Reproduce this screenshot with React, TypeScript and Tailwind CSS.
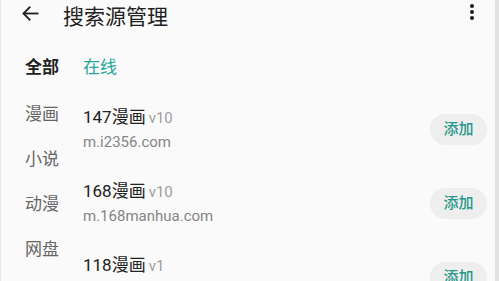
import React from "react";

interface Source {
  name: string;
  version: string;
  host: string;
}

const sources: Source[] = [
  { name: "147漫画", version: "v10", host: "m.i2356.com" },
  { name: "168漫画", version: "v10", host: "m.168manhua.com" },
  { name: "118漫画", version: "v1", host: "m.118manhua.com" },
];

const categories = ["漫画", "小说", "动漫", "网盘"];

const font = { fontFamily: 'Roboto, "Noto Sans CJK SC", sans-serif' };

export default function App() {
  return (
    <div
      className="w-[499px] h-[281px] overflow-hidden bg-[#fafafa] flex border-l border-[#e6e6e6]"
      style={font}
    >
      <div className="flex-1 flex flex-col">
        {/* toolbar */}
        <div className="h-[34px] flex items-center shrink-0">
          <div className="w-[62px] flex pl-[19px] -mt-[8px]">
            <svg width="21" height="21" viewBox="0 0 24 24" fill="none" stroke="#212121" strokeWidth="2.1" strokeLinecap="square">
              <path d="M20 12H5" />
              <path d="M11 5l-7 7 7 7" />
            </svg>
          </div>
          <h1 className="text-[21px] leading-[28px] text-[#212121] flex-1">搜索源管理</h1>
          <div className="w-[24px] mr-[11px] -mt-[10px] flex flex-col items-center gap-[2px]">
            <span className="w-[4px] h-[4px] rounded-full bg-[#212121]" />
            <span className="w-[4px] h-[4px] rounded-full bg-[#212121]" />
            <span className="w-[4px] h-[4px] rounded-full bg-[#212121]" />
          </div>
        </div>

        <div className="flex flex-1">
          {/* categories */}
          <div className="w-[82px] pl-[24px] pt-[22px] shrink-0">
            <div className="h-[24px] flex items-center text-[17px] font-bold text-[#212121]">全部</div>
            <div className="mt-[12px]">
              {categories.map((c) => (
                <div key={c} className="h-[45px] flex items-center text-[17px] text-[#666666]">
                  {c}
                </div>
              ))}
            </div>
          </div>

          {/* sources */}
          <div className="flex-1 pt-[22px]">
            <div className="h-[24px] flex items-center text-[17px] text-[#26a69a]">在线</div>
            <div className="mt-[12px]">
              {sources.map((s) => (
                <div key={s.name} className="h-[74px] flex items-center justify-between pr-[8px]">
                  <div className="flex flex-col">
                    <div className="leading-[22px] text-[#212121]">
                      <span className="text-[17px]">{s.name}</span>
                      <span className="text-[15px] text-[#9e9e9e] ml-[3px]">{s.version}</span>
                    </div>
                    <div className="leading-[22px] mt-[2px] text-[15px] text-[#858585]">{s.host}</div>
                  </div>
                  <button className="w-[57px] h-[31px] rounded-full bg-[#eeeeee] text-[15px] font-medium text-[#26978a]">
                    添加
                  </button>
                </div>
              ))}
            </div>
          </div>
        </div>
      </div>
      <div className="w-[4px] bg-[#e2e2e2] shrink-0" />
    </div>
  );
}
